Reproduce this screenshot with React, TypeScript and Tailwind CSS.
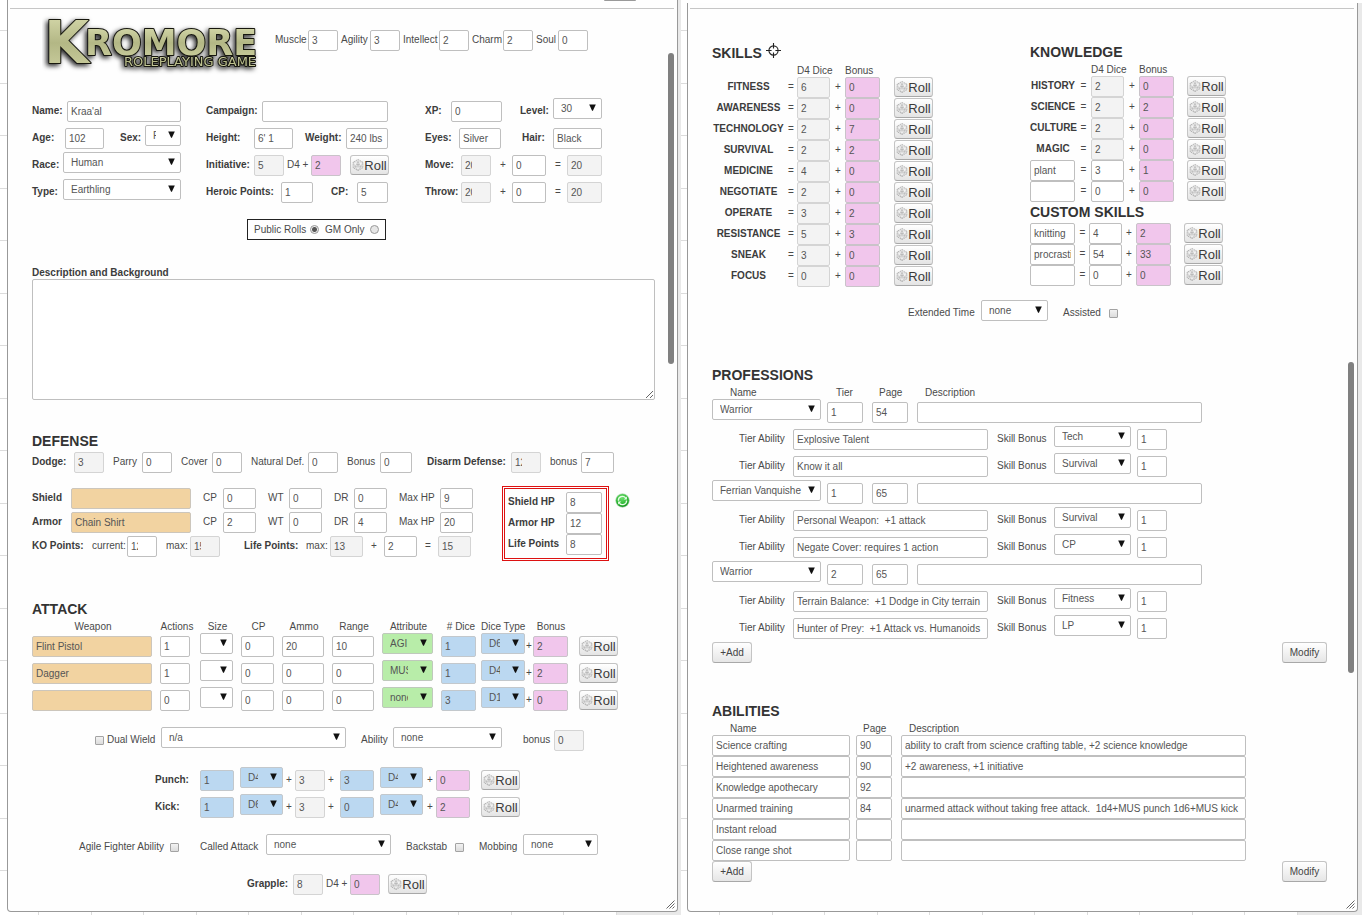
import React from "react";
import clsx from "clsx";

type Tone = "white" | "read" | "pink" | "blue" | "tan" | "green";

const tones: Record<Tone, string> = {
  white: "bg-white border-[#bfbfbf]",
  read: "bg-[#f3f3f3] border-[#d4d4d4]",
  pink: "bg-[#f1c6ec] border-[#c9c3c9]",
  blue: "bg-[#bbd8f1] border-[#c3c8cc]",
  tan: "bg-[#f2d3a1] border-[#ccc6bc]",
  green: "bg-[#b8eda9] border-[#bfc9bc]",
};

type FieldProps = {
  id?: string;
  name?: string;
  value?: string;
  w?: string;
  tone?: Tone;
  clip?: boolean;
};

function Field({ id, name, value = "", w = "w-full", tone = "white", clip }: FieldProps) {
  return (
    <input
      id={id}
      aria-label={name}
      defaultValue={value}
      readOnly={tone === "read"}
      className={clsx(
        "block h-[21px] self-end rounded-[2px] border pl-[3px] text-[10px] text-[#555] outline-none",
        clip ? "pr-[18px]" : "pr-[3px]",
        tones[tone],
        w
      )}
    />
  );
}

type PickProps = {
  id?: string;
  name?: string;
  value?: string;
  options?: string[];
  w?: string;
  tone?: Tone;
  roomy?: boolean;
};

function Pick({ id, name, value = "", options = [], w = "w-full", tone = "white", roomy }: PickProps) {
  return (
    <span className={clsx("relative block h-[21px] self-start", w)}>
      <select
        id={id}
        aria-label={name}
        defaultValue={value}
        className={clsx(
          "block h-full w-full appearance-none overflow-hidden rounded-[2px] border pl-[7px] text-[10px] text-[#555] outline-none",
          roomy ? "pr-4" : "pr-6",
          tones[tone]
        )}
      >
        {[value, ...options].map((o) => (
          <option key={o} value={o}>
            {o}
          </option>
        ))}
      </select>
      <svg className="pointer-events-none absolute top-[6px] right-[6px]" width="7" height="7" viewBox="0 0 7 7">
        <path d="M0.2 0.4h6.6L3.9 6.8H3.1z" fill="#111" />
      </svg>
    </span>
  );
}

function Label({ htmlFor, bold, center, children }: { htmlFor?: string; bold?: boolean; center?: boolean; children: React.ReactNode }) {
  const cls = clsx(
    "block h-[21px] self-end text-[10px] leading-5 whitespace-nowrap",
    bold ? "font-bold text-[#3c3c3c]" : "text-[#4a4a4a]",
    center && "text-center"
  );
  return htmlFor ? (
    <label htmlFor={htmlFor} className={cls}>
      {children}
    </label>
  ) : (
    <span className={cls}>{children}</span>
  );
}

function Check({ id }: { id: string }) {
  return (
    <input
      id={id}
      type="checkbox"
      className="mb-[6px] block size-[9px] appearance-none self-end rounded-[1px] border border-[#a3a3a3] bg-linear-to-b from-[#f2f2f2] to-[#dcdcdc] checked:bg-gray-600"
    />
  );
}

function Radio({ id, checked }: { id: string; checked?: boolean }) {
  return (
    <input
      id={id}
      type="radio"
      name="visibility"
      defaultChecked={checked}
      className="block size-[9px] appearance-none rounded-full border border-[#999] bg-[#e6e6e6] checked:bg-[radial-gradient(circle,#555_0_2px,#eee_3px)]"
    />
  );
}

function Roll({ name }: { name: string }) {
  return (
    <button
      type="button"
      aria-label={`Roll ${name}`}
      className="flex h-5 w-[39px] items-center justify-center rounded-[3px] border border-[#c4c4c4] border-b-[#a8a8a8] bg-linear-to-b from-white to-[#e4e4e4] text-[13px] leading-none text-[#3a3a3a]"
    >
      <svg width="12" height="12" viewBox="0 0 12 12" fill="none" stroke="#b4b4b4" strokeWidth="0.5" className="shrink-0">
        <path d="M6 0.5l4.8 2.7v5.6L6 11.5 1.2 8.8V3.2z" stroke="#999" strokeWidth="0.7" strokeDasharray="1.6 0.6" />
        <path d="M6 2.8l2.9 5H3.1z" stroke="#999" />
        <path d="M6 0.5v2.3M1.2 3.2L6 2.8l4.8 0.4M1.2 3.2l1.9 4.6-1.9 1M10.8 3.2L8.9 7.8l1.9 1M3.1 7.8L6 11.5l2.9-3.7" />
        <path d="M5.3 6.6L6 4.8l0.7 1.8M5.5 6h1" stroke="#888" />
      </svg>
      Roll
    </button>
  );
}

function SmallButton({ w, children }: { w: string; children: React.ReactNode }) {
  return (
    <button
      type="button"
      className={clsx(
        "h-[21px] rounded-[3px] border border-[#c4c4c4] border-b-[#a8a8a8] bg-linear-to-b from-white to-[#e6e6e6] text-[10px] leading-none text-[#444]",
        w
      )}
    >
      {children}
    </button>
  );
}

function Heading({ children }: { children: React.ReactNode }) {
  return <h2 className="text-[14px] leading-[21px] font-bold text-[#333]">{children}</h2>;
}

function Row({ cols, tall, children }: { cols: string; tall?: boolean; children: React.ReactNode }) {
  return <div className={clsx("grid", tall ? "h-6" : "h-[21px]", cols)}>{children}</div>;
}

function Logo() {
  return (
    <svg width="228" height="82" viewBox="0 -10 228 82" role="img" aria-label="Kromore Roleplaying Game">
      <defs>
        <linearGradient id="metal" x1="0" y1="0" x2="0" y2="1">
          <stop offset="0" stopColor="#dcdfb2" />
          <stop offset="0.5" stopColor="#b3b785" />
          <stop offset="1" stopColor="#d0d3a4" />
        </linearGradient>
        <filter id="glow" x="-10%" y="-20%" width="120%" height="150%">
          <feDropShadow dx="-2" dy="2" stdDeviation="2.6" floodColor="#000" floodOpacity="0.85" />
        </filter>
      </defs>
      <g
        filter="url(#glow)"
        fill="url(#metal)"
        stroke="#15150f"
        strokeLinejoin="round"
        paintOrder="stroke"
        fontFamily="'DejaVu Sans', sans-serif"
      >
        <text x="2" y="51" fontSize="58" fontWeight="700" strokeWidth="2">
          K
        </text>
        <text x="43" y="43" fontSize="35" fontWeight="700" strokeWidth="2">
          ROMORE
        </text>
        <text x="82" y="54" fontSize="13" strokeWidth="2">
          ROLEPLAYING GAME
        </text>
      </g>
    </svg>
  );
}

function Grip() {
  return (
    <svg className="absolute right-[2px] bottom-[2px]" width="9" height="9" viewBox="0 0 9 9" stroke="#666" strokeWidth="1">
      <path d="M0.5 8.5l8-8M3.5 8.5l5-5M6.5 8.5l2-2" />
    </svg>
  );
}

function Half({ frame, children }: { frame: string; children: React.ReactNode }) {
  return (
    <div className={clsx("relative flex min-w-0 flex-1 flex-col bg-[#e9e9e9] pb-[3px]", frame)}>
      <div className="absolute inset-y-0 right-16 left-0 overflow-hidden bg-white">
        <div className="h-full bg-[repeating-linear-gradient(to_bottom,transparent_0_30px,#dcdcdc_30px_31px,transparent_31px_83px,#dcdcdc_83px_84px,transparent_84px_105px),repeating-linear-gradient(to_right,transparent_0_38px,#dcdcdc_38px_39px,transparent_39px_91px,#dcdcdc_91px_92px,transparent_92px_105px)]" />
      </div>
      {children}
    </div>
  );
}

const attributes = [
  ["Muscle", "3"],
  ["Agility", "3"],
  ["Intellect", "2"],
  ["Charm", "2"],
  ["Soul", "0"],
];

const weapons = [
  { name: "Flint Pistol", actions: "1", cp: "0", ammo: "20", range: "10", attr: "AGI", dice: "1", type: "D6", bonus: "2" },
  { name: "Dagger", actions: "1", cp: "0", ammo: "0", range: "0", attr: "MUS", dice: "1", type: "D4", bonus: "2" },
  { name: "", actions: "0", cp: "0", ammo: "0", range: "0", attr: "none", dice: "3", type: "D10", bonus: "0" },
];

const strikes = [
  { name: "Punch", n: "1", die: "D4", mod: "3", extra: "3", die2: "D4", bonus: "0" },
  { name: "Kick", n: "1", die: "D6", mod: "3", extra: "0", die2: "D4", bonus: "2" },
];

function Identity() {
  return (
    <div className="grid grid-cols-[174px_219px_177px]">
      <div className="grid w-[149px] content-start gap-[3px]">
        <Row tall cols="grid-cols-[35px_114px]">
          <Label bold htmlFor="name">Name:</Label>
          <Field id="name" value="Kraa'al" />
        </Row>
        <Row tall cols="grid-cols-[33px_55px_25px_36px]">
          <Label bold htmlFor="age">Age:</Label>
          <Field id="age" value="102" w="w-[39px]" />
          <Label bold htmlFor="sex">Sex:</Label>
          <Pick id="sex" value="F" options={["M"]} />
        </Row>
        <Row tall cols="grid-cols-[31px_118px]">
          <Label bold htmlFor="race">Race:</Label>
          <Pick id="race" value="Human" />
        </Row>
        <Row tall cols="grid-cols-[31px_118px]">
          <Label bold htmlFor="type">Type:</Label>
          <Pick id="type" value="Earthling" />
        </Row>
      </div>
      <div className="grid w-[183px] content-start gap-[3px]">
        <Row tall cols="grid-cols-[56px_126px]">
          <Label bold htmlFor="campaign">Campaign:</Label>
          <Field id="campaign" />
        </Row>
        <Row tall cols="grid-cols-[48px_51px_41px_42px]">
          <Label bold htmlFor="height">Height:</Label>
          <Field id="height" value="6' 1" w="w-[39px]" />
          <Label bold htmlFor="weight">Weight:</Label>
          <Field id="weight" value="240 lbs" />
        </Row>
        <Row tall cols="grid-cols-[48px_33px_24px_39px_39px]">
          <Label bold htmlFor="initiative">Initiative:</Label>
          <Field id="initiative" value="5" w="w-[30px]" tone="read" />
          <Label htmlFor="initiative-bonus">D4 +</Label>
          <Field id="initiative-bonus" value="2" w="w-[30px]" tone="pink" />
          <div className="pt-[3px]">
            <Roll name="initiative" />
          </div>
        </Row>
        <Row tall cols="grid-cols-[75px_50px_26px_31px]">
          <Label bold htmlFor="heroic">Heroic Points:</Label>
          <Field id="heroic" value="1" w="w-[32px]" />
          <Label bold htmlFor="cp">CP:</Label>
          <Field id="cp" value="5" />
        </Row>
      </div>
      <div className="grid content-start gap-[3px]">
        <Row tall cols="grid-cols-[26px_69px_33px_49px]">
          <Label bold htmlFor="xp">XP:</Label>
          <Field id="xp" value="0" w="w-[51px]" />
          <Label bold htmlFor="level">Level:</Label>
          <Pick id="level" value="30" />
        </Row>
        <Row tall cols="grid-cols-[34px_63px_31px_49px]">
          <Label bold htmlFor="eyes">Eyes:</Label>
          <Field id="eyes" value="Silver" w="w-[42px]" />
          <Label bold htmlFor="hair">Hair:</Label>
          <Field id="hair" value="Black" />
        </Row>
        {["Move", "Throw"].map((n) => (
          <Row key={n} tall cols="grid-cols-[36px_39px_12px_43px_12px_35px]">
            <Label bold htmlFor={n}>{n}:</Label>
            <Field id={n} value="20" w="w-[30px]" tone="read" clip />
            <Label>+</Label>
            <Field name={`${n} bonus`} value="0" w="w-[34px]" />
            <Label>=</Label>
            <Field name={`${n} total`} value="20" tone="read" />
          </Row>
        ))}
      </div>
    </div>
  );
}

function Defense() {
  const gear = [
    { name: "Shield", item: "", cp: "0", wt: "0", dr: "0", hp: "9" },
    { name: "Armor", item: "Chain Shirt", cp: "2", wt: "0", dr: "4", hp: "20" },
  ];
  return (
    <section className="mt-[31px]">
      <Heading>DEFENSE</Heading>
      <Row cols="grid-cols-[42px_39px_29px_39px_31px_39px_57px_39px_33px_47px_84px_39px_31px_33px]">
        <Label bold htmlFor="dodge">Dodge:</Label>
        <Field id="dodge" value="3" w="w-[30px]" tone="read" />
        <Label htmlFor="parry">Parry</Label>
        <Field id="parry" value="0" w="w-[30px]" />
        <Label htmlFor="cover">Cover</Label>
        <Field id="cover" value="0" w="w-[30px]" />
        <Label htmlFor="natural">Natural Def.</Label>
        <Field id="natural" value="0" w="w-[30px]" />
        <Label htmlFor="def-bonus">Bonus</Label>
        <Field id="def-bonus" value="0" w="w-[32px]" />
        <Label bold htmlFor="disarm">Disarm Defense:</Label>
        <Field id="disarm" value="12" w="w-[30px]" tone="read" clip />
        <Label htmlFor="disarm-bonus">bonus</Label>
        <Field id="disarm-bonus" value="7" />
      </Row>
      <div className="mt-[13px] flex items-start">
        <div className="grid w-[470px] gap-[3px] pt-[2px]">
          {gear.map((g) => (
            <Row key={g.name} cols="grid-cols-[39px_132px_20px_45px_21px_45px_20px_45px_41px_33px]">
              <Label bold htmlFor={g.name}>{g.name}</Label>
              <Field id={g.name} value={g.item} w="w-[120px]" tone="tan" />
              <Label htmlFor={`${g.name}-cp`}>CP</Label>
              <Field id={`${g.name}-cp`} value={g.cp} w="w-[33px]" />
              <Label htmlFor={`${g.name}-wt`}>WT</Label>
              <Field id={`${g.name}-wt`} value={g.wt} w="w-[33px]" />
              <Label htmlFor={`${g.name}-dr`}>DR</Label>
              <Field id={`${g.name}-dr`} value={g.dr} w="w-[33px]" />
              <Label htmlFor={`${g.name}-hp`}>Max HP</Label>
              <Field id={`${g.name}-hp`} value={g.hp} />
            </Row>
          ))}
          <Row cols="grid-cols-[60px_35px_39px_24px_54px_62px_24px_41px_13px_41px_13px_33px]">
            <Label bold>KO Points:</Label>
            <Label htmlFor="ko-current">current:</Label>
            <Field id="ko-current" value="12" w="w-[30px]" clip />
            <Label htmlFor="ko-max">max:</Label>
            <Field id="ko-max" value="15" w="w-[30px]" tone="read" clip />
            <Label bold>Life Points:</Label>
            <Label htmlFor="life-max">max:</Label>
            <Field id="life-max" value="13" w="w-[33px]" tone="read" />
            <Label>+</Label>
            <Field name="Life bonus" value="2" w="w-[33px]" />
            <Label>=</Label>
            <Field name="Life total" value="15" tone="read" />
          </Row>
        </div>
        <div className="w-[107px] border-[3px] border-double border-[#dd1111] p-[3px]">
          {[
            ["Shield HP", "8"],
            ["Armor HP", "12"],
            ["Life Points", "8"],
          ].map(([n, v]) => (
            <Row key={n} cols="grid-cols-[58px_36px]">
              <Label bold htmlFor={n}>{n}</Label>
              <Field id={n} value={v} />
            </Row>
          ))}
        </div>
        <button type="button" aria-label="Refresh" className="mt-[7px] ml-[6px]">
          <svg width="15" height="15" viewBox="0 0 15 15">
            <defs>
              <radialGradient id="green" cx="0.45" cy="0.3" r="0.75">
                <stop offset="0" stopColor="#6fe36f" />
                <stop offset="0.7" stopColor="#23b02b" />
                <stop offset="1" stopColor="#0c7d16" />
              </radialGradient>
            </defs>
            <circle cx="7.5" cy="7.5" r="6.8" fill="url(#green)" stroke="#b9d9b9" strokeWidth="0.6" />
            <path d="M3.4 7.8a4.1 4.1 0 0 1 7.2-3" fill="none" stroke="#e9fbe9" strokeWidth="1.3" />
            <path d="M11.6 7.4a4.1 4.1 0 0 1-7.2 2.8" fill="none" stroke="#e9fbe9" strokeWidth="1.3" />
            <path d="M11.9 3.4v3.2H8.7zM3.1 11.6V8.4h3.2z" fill="#e9fbe9" />
          </svg>
        </button>
      </div>
    </section>
  );
}

function Attack() {
  const heads = ["Weapon", "Actions", "Size", "CP", "Ammo", "Range", "Attribute", "# Dice", "Dice Type", "", "Bonus", ""];
  return (
    <section className="mt-[38px]">
      <Heading>ATTACK</Heading>
      <table className="w-[586px] table-fixed border-collapse">
        <colgroup>
          <col className="w-[128px]" />
          <col className="w-[40px]" />
          <col className="w-[41px]" />
          <col className="w-[41px]" />
          <col className="w-[50px]" />
          <col className="w-[50px]" />
          <col className="w-[59px]" />
          <col className="w-[40px]" />
          <col className="w-[44px]" />
          <col className="w-[8px]" />
          <col className="w-[46px]" />
          <col className="w-[39px]" />
        </colgroup>
        <thead>
          <tr className="h-[13px]">
            {heads.map((h, i) => (
              <th key={i} scope="col" className="p-0 text-[10px] leading-[13px] font-normal whitespace-nowrap text-[#4a4a4a]">
                <span className={clsx("block text-center", i < 7 && "pr-[6px]", i === 10 && "pr-[10px]")}>{h}</span>
              </th>
            ))}
          </tr>
        </thead>
        <tbody className="[&_td]:p-0 [&_td]:pb-[3px]">
          {weapons.map((w, i) => (
            <tr key={i} className="h-[27px]">
              <td className="align-bottom"><Field name="Weapon" value={w.name} w="w-[120px]" tone="tan" /></td>
              <td className="align-bottom"><Field name="Actions" value={w.actions} w="w-[30px]" /></td>
              <td className="align-top"><Pick name="Size" w="w-[33px]" /></td>
              <td className="align-bottom"><Field name="CP" value={w.cp} w="w-[33px]" /></td>
              <td className="align-bottom"><Field name="Ammo" value={w.ammo} w="w-[42px]" /></td>
              <td className="align-bottom"><Field name="Range" value={w.range} w="w-[42px]" /></td>
              <td className="align-top"><Pick name="Attribute" value={w.attr} w="w-[51px]" tone="green" /></td>
              <td className="align-bottom"><Field name="Number of dice" value={w.dice} w="w-[35px]" tone="blue" /></td>
              <td className="align-top"><Pick name="Dice type" value={w.type} tone="blue" /></td>
              <td className="align-bottom"><Label center>+</Label></td>
              <td className="align-bottom"><Field name="Bonus" value={w.bonus} w="w-[35px]" tone="pink" /></td>
              <td className="align-middle"><div className="flex pt-[2px]"><Roll name={w.name || "weapon"} /></div></td>
            </tr>
          ))}
        </tbody>
      </table>
      <div className="mt-[13px] pl-[63px]">
        <Row tall cols="grid-cols-[12px_54px_200px_32px_130px_31px_30px]">
          <Check id="dual" />
          <Label htmlFor="dual">Dual Wield</Label>
          <Pick name="Dual wield weapon" value="n/a" w="w-[185px]" />
          <Label htmlFor="ability">Ability</Label>
          <Pick id="ability" value="none" w="w-[109px]" />
          <Label htmlFor="ability-bonus">bonus</Label>
          <Field id="ability-bonus" value="0" tone="read" />
        </Row>
      </div>
      <div className="mt-4 grid gap-[3px] pl-[123px]">
        {strikes.map((s) => (
          <Row key={s.name} tall cols="grid-cols-[45px_40px_46px_9px_33px_12px_40px_47px_9px_45px_39px]">
            <Label bold htmlFor={s.name}>{s.name}:</Label>
            <Field id={s.name} value={s.n} w="w-[34px]" tone="blue" />
            <Pick name={`${s.name} die`} value={s.die} w="w-[43px]" tone="blue" />
            <Label>+</Label>
            <Field name={`${s.name} modifier`} value={s.mod} w="w-[30px]" tone="read" />
            <Label>+</Label>
            <Field name={`${s.name} extra dice`} value={s.extra} w="w-[34px]" tone="blue" />
            <Pick name={`${s.name} extra die`} value={s.die2} w="w-[43px]" tone="blue" />
            <Label>+</Label>
            <Field name={`${s.name} bonus`} value={s.bonus} w="w-[34px]" tone="pink" />
            <div className="pt-[3px]">
              <Roll name={s.name} />
            </div>
          </Row>
        ))}
      </div>
      <div className="mt-4 pl-[47px]">
        <Row tall cols="grid-cols-[91px_30px_66px_140px_49px_24px_44px_75px]">
          <Label htmlFor="agile">Agile Fighter Ability</Label>
          <Check id="agile" />
          <Label htmlFor="called">Called Attack</Label>
          <Pick id="called" value="none" w="w-[125px]" />
          <Label htmlFor="backstab">Backstab</Label>
          <Check id="backstab" />
          <Label htmlFor="mobbing">Mobbing</Label>
          <Pick id="mobbing" value="none" />
        </Row>
      </div>
      <div className="mt-4 pl-[215px]">
        <Row cols="grid-cols-[46px_33px_24px_38px_39px]">
          <Label bold htmlFor="grapple">Grapple:</Label>
          <Field id="grapple" value="8" w="w-[30px]" tone="read" />
          <Label htmlFor="grapple-bonus">D4 +</Label>
          <Field id="grapple-bonus" value="0" w="w-[30px]" tone="pink" />
          <Roll name="grapple" />
        </Row>
      </div>
    </section>
  );
}

type Skill = { name: string; dice: string; bonus: string; custom?: boolean };

const skills: Skill[] = [
  { name: "FITNESS", dice: "6", bonus: "0" },
  { name: "AWARENESS", dice: "2", bonus: "0" },
  { name: "TECHNOLOGY", dice: "2", bonus: "7" },
  { name: "SURVIVAL", dice: "2", bonus: "2" },
  { name: "MEDICINE", dice: "4", bonus: "0" },
  { name: "NEGOTIATE", dice: "2", bonus: "0" },
  { name: "OPERATE", dice: "3", bonus: "2" },
  { name: "RESISTANCE", dice: "5", bonus: "3" },
  { name: "SNEAK", dice: "3", bonus: "0" },
  { name: "FOCUS", dice: "0", bonus: "0" },
];

const knowledge: Skill[] = [
  { name: "HISTORY", dice: "2", bonus: "0" },
  { name: "SCIENCE", dice: "2", bonus: "2" },
  { name: "CULTURE", dice: "2", bonus: "0" },
  { name: "MAGIC", dice: "2", bonus: "0" },
  { name: "plant", dice: "3", bonus: "1", custom: true },
  { name: "", dice: "0", bonus: "0", custom: true },
];

const customSkills: Skill[] = [
  { name: "knitting", dice: "4", bonus: "2", custom: true },
  { name: "procrastinate", dice: "54", bonus: "33", custom: true },
  { name: "", dice: "0", bonus: "0", custom: true },
];

function SkillRows({ list, cols }: { list: Skill[]; cols: string }) {
  return (
    <>
      {list.map((s, i) => (
        <Row key={i} cols={cols}>
          {s.custom ? (
            <Field name="Skill name" value={s.name} w="w-[45px]" />
          ) : (
            <Label bold center htmlFor={`skill-${s.name}`}>{s.name}</Label>
          )}
          <Label center>=</Label>
          <Field
            id={s.custom ? undefined : `skill-${s.name}`}
            name={s.custom ? `${s.name} dice` : undefined}
            value={s.dice}
            w="w-[33px]"
            tone={s.custom ? "white" : "read"}
          />
          <Label>+</Label>
          <Field name={`${s.name} bonus`} value={s.bonus} w="w-[35px]" tone="pink" />
          <Roll name={s.name || "skill"} />
        </Row>
      ))}
    </>
  );
}

const headText = "text-[10px] leading-[13px] whitespace-nowrap text-[#4a4a4a]";

const professions = [
  { name: "Warrior", tier: "1", page: "54", tiers: [["Explosive Talent", "Tech"], ["Know it all", "Survival"]] },
  {
    name: "Ferrian Vanquishe",
    tier: "1",
    page: "65",
    tiers: [["Personal Weapon:  +1 attack", "Survival"], ["Negate Cover: requires 1 action", "CP"]],
  },
  {
    name: "Warrior",
    tier: "2",
    page: "65",
    tiers: [["Terrain Balance:  +1 Dodge in City terrain", "Fitness"], ["Hunter of Prey:  +1 Attack vs. Humanoids", "LP"]],
  },
];

const abilities = [
  ["Science crafting", "90", "ability to craft from science crafting table, +2 science knowledge"],
  ["Heightened awareness", "90", "+2 awareness, +1 initiative"],
  ["Knowledge apothecary", "92", ""],
  ["Unarmed training", "84", "unarmed attack without taking free attack.  1d4+MUS punch 1d6+MUS kick"],
  ["Instant reload", "", ""],
  ["Close range shot", "", ""],
];

function Actions() {
  return (
    <div className="flex justify-between">
      <SmallButton w="w-10">+Add</SmallButton>
      <SmallButton w="w-[45px]">Modify</SmallButton>
    </div>
  );
}

function Skills() {
  return (
    <>
      <div className="grid grid-cols-[318px_197px]">
        <section className="pt-px">
          <div className="flex items-center gap-1">
            <Heading>SKILLS</Heading>
            <svg width="15" height="15" viewBox="0 0 15 15" fill="none" stroke="#222" strokeWidth="1.1" className="self-start">
              <circle cx="7.5" cy="7.5" r="4.6" />
              <path d="M7.5 0v5.6M7.5 9.4V15M0 7.5h5.6M9.4 7.5H15" />
            </svg>
          </div>
          <div className={clsx("grid grid-cols-[85px_48px_35px]", headText)}>
            <span />
            <span>D4 Dice</span>
            <span>Bonus</span>
          </div>
          <SkillRows list={skills} cols="grid-cols-[73px_12px_38px_10px_49px_39px]" />
        </section>
        <section>
          <Heading>KNOWLEDGE</Heading>
          <div className={clsx("grid grid-cols-[61px_48px_35px]", headText)}>
            <span />
            <span>D4 Dice</span>
            <span>Bonus</span>
          </div>
          <SkillRows list={knowledge} cols="grid-cols-[46px_15px_38px_10px_48px_39px]" />
          <Heading>CUSTOM SKILLS</Heading>
          <SkillRows list={customSkills} cols="grid-cols-[46px_13px_37px_10px_48px_39px]" />
        </section>
      </div>
      <div className="mt-[13px] pl-[196px]">
        <Row tall cols="grid-cols-[73px_82px_46px_9px]">
          <Label htmlFor="extended">Extended Time</Label>
          <Pick id="extended" value="none" w="w-[67px]" />
          <Label htmlFor="assisted">Assisted</Label>
          <Check id="assisted" />
        </Row>
      </div>
    </>
  );
}

function Professions() {
  return (
    <section className="mt-[41px]">
      <Heading>PROFESSIONS</Heading>
      <div className={clsx("grid grid-cols-[106px_43px_46px_100px] pl-[18px]", headText)}>
        <span>Name</span>
        <span>Tier</span>
        <span>Page</span>
        <span>Description</span>
      </div>
      <div className="mb-[3px] grid gap-[3px]">
        {professions.map((p, i) => (
          <React.Fragment key={i}>
            <Row tall cols="grid-cols-[115px_45px_45px_285px]">
              <Pick name="Profession" value={p.name} w="w-[109px]" roomy />
              <Field name="Tier" value={p.tier} w="w-[36px]" />
              <Field name="Page" value={p.page} w="w-[36px]" />
              <Field name="Description" />
            </Row>
            {p.tiers.map(([ability, bonus], j) => (
              <div key={j} className="pl-[27px]">
                <Row tall cols="grid-cols-[54px_204px_57px_83px_30px]">
                  <Label htmlFor={`tier-${i}-${j}`}>Tier Ability</Label>
                  <Field id={`tier-${i}-${j}`} value={ability} w="w-[195px]" />
                  <Label htmlFor={`bonus-${i}-${j}`}>Skill Bonus</Label>
                  <Pick id={`bonus-${i}-${j}`} value={bonus} w="w-[77px]" />
                  <Field name="Bonus amount" value="1" />
                </Row>
              </div>
            ))}
          </React.Fragment>
        ))}
      </div>
      <Actions />
    </section>
  );
}

function Abilities() {
  return (
    <section className="mt-[38px]">
      <Heading>ABILITIES</Heading>
      <table className="w-[534px] table-fixed border-collapse">
        <colgroup>
          <col className="w-[144px]" />
          <col className="w-[45px]" />
          <col className="w-[345px]" />
        </colgroup>
        <thead>
          <tr className={clsx("text-left", headText)}>
            <th scope="col" className="p-0 pl-[18px] font-normal">Name</th>
            <th scope="col" className="p-0 pl-[7px] font-normal">Page</th>
            <th scope="col" className="p-0 pl-2 font-normal">Description</th>
          </tr>
        </thead>
        <tbody>
          {abilities.map(([name, page, text]) => (
            <tr key={name}>
              <td className="p-0"><Field name="Ability name" value={name} w="w-[138px]" /></td>
              <td className="p-0"><Field name="Page" value={page} w="w-[36px]" /></td>
              <td className="p-0"><Field name="Description" value={text} /></td>
            </tr>
          ))}
        </tbody>
      </table>
      <Actions />
    </section>
  );
}

export default function App() {
  return (
    <div className="flex min-h-screen bg-white font-['Liberation_Sans',Arial,sans-serif]">
      <Half frame="pl-[7px] pr-[3px]">
        <main className="relative flex-1 rounded-b-[4px] border border-t-0 border-[#999] bg-[#fefefe] pr-[22px] pb-4 pl-6">
          <div className="absolute top-0 left-[596px] h-px w-8 rounded-b bg-[#999]" />
          <div className="absolute top-2 right-[3px] left-[2px] h-px bg-[#c6c6c6]" />
          <div className="absolute top-[53px] right-[3px] h-[311px] w-[6px] rounded-full bg-[#808080]" />
          <header className="flex h-[98px] items-start pt-[2px] pl-[10px]">
            <Logo />
            <div className="ml-[5px] grid grid-cols-[33px_33px_29px_33px_36px_33px_31px_33px_22px_30px] pt-7">
              {attributes.map(([n, v]) => (
                <React.Fragment key={n}>
                  <Label htmlFor={n}>{n}</Label>
                  <Field id={n} value={v} w="w-[30px]" />
                </React.Fragment>
              ))}
            </div>
          </header>
          <Identity />
          <fieldset className="mt-4 ml-[215px] flex h-[21px] w-[139px] items-center border border-[#222] px-[6px] text-[10px] text-[#4a4a4a]">
            <label htmlFor="public" className="w-14">Public Rolls</label>
            <Radio id="public" checked />
            <label htmlFor="gm" className="ml-[6px] w-[45px]">GM Only</label>
            <Radio id="gm" />
          </fieldset>
          <label htmlFor="background" className="mt-[26px] block text-[10px] leading-[13px] font-bold text-[#3c3c3c]">
            Description and Background
          </label>
          <textarea
            id="background"
            className="block h-[121px] w-full rounded-[2px] border border-[#bfbfbf] bg-white p-1 text-[10px] text-[#555] outline-none"
          />
          <Defense />
          <Attack />
          <Grip />
        </main>
      </Half>
      <Half frame="pl-[6px] pr-1 pt-[3px]">
        <div className="absolute inset-x-0 top-0 h-[3px] bg-white" />
        <div className="relative flex-1 rounded-b-[4px] border border-t-0 border-[#999] bg-[#fefefe] pt-[39px] pr-[30px] pb-4 pl-6">
          <div className="absolute top-[5px] right-[3px] left-[2px] h-px bg-[#c6c6c6]" />
          <div className="absolute top-[359px] right-[3px] h-[311px] w-[6px] rounded-full bg-[#808080]" />
          <Skills />
          <Professions />
          <Abilities />
          <Grip />
        </div>
      </Half>
    </div>
  );
}
